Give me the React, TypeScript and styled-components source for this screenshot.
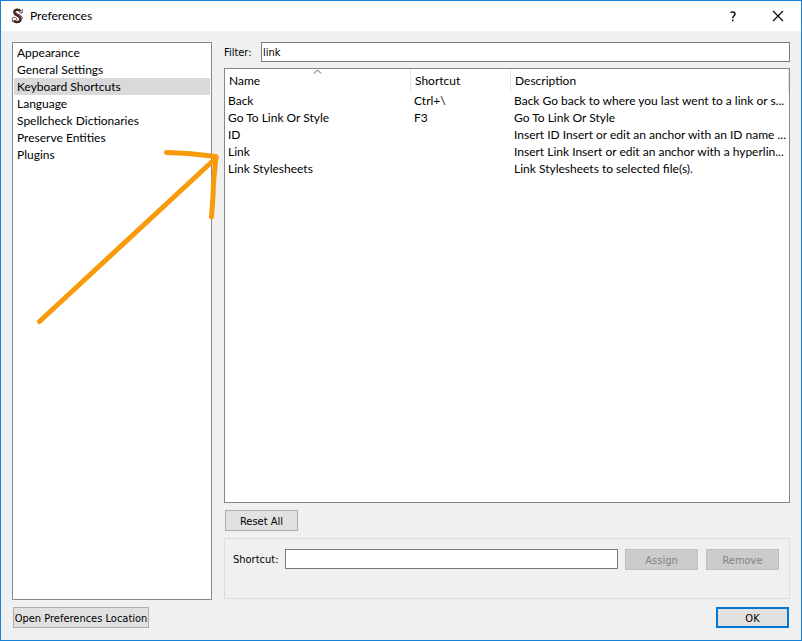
import React, { useState } from "react";
import styled, { createGlobalStyle } from "styled-components";

const GlobalStyle = createGlobalStyle`
  *, *::before, *::after { box-sizing: border-box; }
  body { margin: 0; background: #f0f0f0; }
`;

const listFont = `Lato, "Open Sans", sans-serif`;
const controlFont = `"DejaVu Sans Condensed", "Noto Sans", sans-serif`;

const Window = styled.div`
  position: relative;
  display: flex;
  flex-direction: column;
  min-height: 100vh;
  border: 1px solid #1880d7;
  background: #f0f0f0;
  color: #000;
  font: 12px/17px ${listFont};
`;

const TitleBar = styled.header`
  display: flex;
  align-items: center;
  height: 30px;
  padding: 0 10px;
  background: #fff;
`;

const Title = styled.h1`
  flex: 1;
  margin: 0 0 0 6px;
  font-size: 12px;
  line-height: 16px;
  font-weight: 400;
`;

const CaptionButton = styled.button`
  display: flex;
  align-items: center;
  justify-content: center;
  width: 26px;
  height: 28px;
  margin-left: 19px;
  padding: 0;
  border: 0;
  background: transparent;
  color: #000;
`;

const Content = styled.main`
  flex: 1;
  display: grid;
  grid-template-columns: 200px minmax(0, 1fr);
  gap: 12px;
  padding: 11px 11px 7px;
`;

const CategoryList = styled.ul`
  margin: 0;
  padding: 1px;
  list-style: none;
  border: 1px solid #828790;
  background: #fff;
`;

const Category = styled.button<{ $selected: boolean }>`
  display: block;
  width: 100%;
  height: 17px;
  padding: 0 3px;
  border: 0;
  background: ${(p) => (p.$selected ? "#d9d9d9" : "transparent")};
  color: #000;
  font: inherit;
  text-align: left;
`;

const Panel = styled.section`
  display: flex;
  flex-direction: column;
  padding-bottom: 1px;
`;

const FilterRow = styled.div`
  display: flex;
  align-items: center;
  margin-bottom: 6px;
`;

const Label = styled.label`
  padding-top: 2px;
  font: 11px/18px ${controlFont};
`;

const FilterLabel = styled(Label)`
  width: 37px;
`;

const TextInput = styled.input`
  flex: 1;
  min-width: 0;
  height: 20px;
  padding: 1px 1px 0;
  border: 1px solid #7a7a7a;
  border-radius: 0;
  outline: 0;
  background: #fff;
  color: #000;
  font: 11px/17px ${controlFont};
`;

const TableFrame = styled.div`
  flex: 1;
  border: 1px solid #828790;
  background: #fff;
`;

const Table = styled.table`
  width: 100%;
  table-layout: fixed;
  border-collapse: separate;
  border-spacing: 0;
`;

const HeadCell = styled.th<{ $width?: number }>`
  position: relative;
  width: ${(p) => (p.$width ? `${p.$width}px` : "auto")};
  height: 23px;
  padding: 0 4px;
  border-right: 1px solid #e5e5e5;
  font-weight: 400;
  text-align: left;
`;

const SortMark = styled.svg`
  position: absolute;
  top: 0;
  left: 0;
  right: 0;
  margin: 0 auto;
`;

const Cell = styled.td`
  height: 17px;
  padding: 0 3px;
  overflow: hidden;
  white-space: nowrap;
`;

const Button = styled.button<{ $wide?: boolean }>`
  width: ${(p) => (p.$wide ? 136 : 73)}px;
  height: 21px;
  padding: 1px 0 0;
  border: 1px solid #adadad;
  background: #e1e1e1;
  color: #000;
  font: 11px/17px ${controlFont};
  white-space: nowrap;

  &:disabled {
    border-color: #bfbfbf;
    background: #ccc;
    color: #838383;
  }
`;

const DefaultButton = styled(Button)`
  border: 2px solid #0078d7;
`;

const Actions = styled.div`
  display: flex;
  padding: 7px 1px;
`;

const ShortcutGroup = styled.div`
  display: flex;
  align-items: flex-start;
  gap: 7px;
  height: 61px;
  padding: 10px 10px 10px 8px;
  border: 1px solid #dcdcdc;
`;

const ButtonPair = styled.div`
  display: flex;
  gap: 8px;
`;

const Footer = styled.footer`
  display: flex;
  justify-content: space-between;
  padding: 0 12px 12px;
`;

const Annotation = styled.svg`
  position: absolute;
  top: 139px;
  left: 29px;
  pointer-events: none;
`;

const categories = [
  "Appearance",
  "General Settings",
  "Keyboard Shortcuts",
  "Language",
  "Spellcheck Dictionaries",
  "Preserve Entities",
  "Plugins",
];

const shortcuts = [
  { name: "Back", keys: "Ctrl+\\", text: "Back Go back to where you last went to a link or s..." },
  { name: "Go To Link Or Style", keys: "F3", text: "Go To Link Or Style" },
  { name: "ID", keys: "", text: "Insert ID Insert or edit an anchor with an ID name ..." },
  { name: "Link", keys: "", text: "Insert Link Insert or edit an anchor with a hyperlin..." },
  { name: "Link Stylesheets", keys: "", text: "Link Stylesheets to selected file(s)." },
];

function AppLogo() {
  return (
    <svg width="13" height="16" viewBox="0 0 13 16" fill="none" aria-hidden="true">
      <path
        d="M9.500 3.200C7.500.8 3.300 1.300 3.300 4.400 3.300 7.400 9.600 7.300 9.600 11 9.600 14.600 4 15 2.600 12.600"
        stroke="#4a2024"
        strokeWidth="2.400"
      />
      <path
        d="M8.300 5h2.900V1.200M5 4.300c0 2.200 6.500 2.600 6.500 6.200M1.200 10.200c2-1.800 5-.6 4.300 1.600-.4 1-1.800.9-1.900 0M1.300 10.500v3.200"
        stroke="#6a3a3e"
        strokeWidth="1"
      />
    </svg>
  );
}

export default function App() {
  const [selected, setSelected] = useState("Keyboard Shortcuts");
  const [filter, setFilter] = useState("link");
  const rows = shortcuts.filter(
    (s) => s.name === "ID" || `${s.name} ${s.text}`.toLowerCase().includes(filter.toLowerCase())
  );

  return (
    <>
      <GlobalStyle />
      <Window>
        <TitleBar>
          <AppLogo />
          <Title>Preferences</Title>
          <CaptionButton aria-label="Help">
            <svg width="8" height="11" viewBox="0 0 8 11" fill="none" aria-hidden="true">
              <path d="M1.500 1.700C2.700.6 6 .4 6 3 6 4.800 3.700 4.800 3.700 7.300" stroke="#000" strokeWidth="1.400" />
              <path d="M2.900 8.700h1.600v1.600H2.900z" fill="#000" />
            </svg>
          </CaptionButton>
          <CaptionButton aria-label="Close">
            <svg width="12" height="12" viewBox="0 0 12 12" aria-hidden="true">
              <path d="M1 1l10 10M11 1L1 11" stroke="#000" strokeWidth="1.100" />
            </svg>
          </CaptionButton>
        </TitleBar>

        <Content>
          <CategoryList>
            {categories.map((c) => (
              <li key={c}>
                <Category $selected={c === selected} onClick={() => setSelected(c)}>
                  {c}
                </Category>
              </li>
            ))}
          </CategoryList>

          <Panel>
            <FilterRow>
              <FilterLabel htmlFor="filter">Filter:</FilterLabel>
              <TextInput id="filter" value={filter} onChange={(e) => setFilter(e.target.value)} />
            </FilterRow>

            <TableFrame>
              <Table>
                <thead>
                  <tr>
                    <HeadCell $width={186} aria-sort="ascending">
                      Name
                      <SortMark width="9" height="5" viewBox="0 0 9 5" fill="none" aria-hidden="true">
                        <path d="M1 4.500L4.500 1 8 4.500" stroke="#555" />
                      </SortMark>
                    </HeadCell>
                    <HeadCell $width={100}>Shortcut</HeadCell>
                    <HeadCell>Description</HeadCell>
                  </tr>
                </thead>
                <tbody>
                  {rows.map((r) => (
                    <tr key={r.name}>
                      <Cell>{r.name}</Cell>
                      <Cell>{r.keys}</Cell>
                      <Cell>{r.text}</Cell>
                    </tr>
                  ))}
                </tbody>
              </Table>
            </TableFrame>

            <Actions>
              <Button>Reset All</Button>
            </Actions>

            <ShortcutGroup>
              <Label htmlFor="shortcut">Shortcut:</Label>
              <TextInput id="shortcut" />
              <ButtonPair>
                <Button disabled>Assign</Button>
                <Button disabled>Remove</Button>
              </ButtonPair>
            </ShortcutGroup>
          </Panel>
        </Content>

        <Footer>
          <Button $wide>Open Preferences Location</Button>
          <DefaultButton>OK</DefaultButton>
        </Footer>

        <Annotation width="194" height="190" viewBox="0 0 194 190" fill="none" aria-hidden="true">
          <path
            d="M9.500 181.500L186 18M136.500 12.500L158 13.500 186 16.500 183.500 42 183 56 181.500 77"
            stroke="#f79a0b"
            strokeWidth="5"
            strokeLinecap="round"
            strokeLinejoin="round"
          />
        </Annotation>
      </Window>
    </>
  );
}
